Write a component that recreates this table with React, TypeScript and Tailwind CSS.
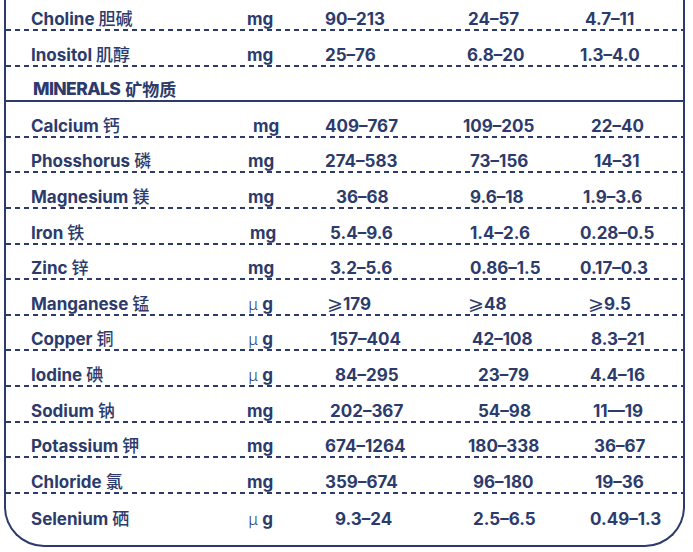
import React from "react";

type Row = {
  name: string;
  cn: string;
  unit: "mg" | "ug";
  unitCls: string;
  v1: string;
  c1: string;
  v2: string;
  c2: string;
  v3: string;
  c3: string;
};

const top: Row[] = [
  { name: "Choline", cn: "胆碱", unit: "mg", unitCls: "pl-0", v1: "90–213", c1: "pl-0", v2: "24–57", c2: "pl-[5px]", v3: "4.7–11", c3: "pl-[5px]" },
  { name: "Inositol", cn: "肌醇", unit: "mg", unitCls: "pl-0", v1: "25–76", c1: "pl-0", v2: "6.8–20", c2: "pl-[4px]", v3: "1.3–4.0", c3: "pl-0" },
];

const minerals: Row[] = [
  { name: "Calcium", cn: "钙", unit: "mg", unitCls: "pl-[6px]", v1: "409–767", c1: "pl-0", v2: "109–205", c2: "pl-0", v3: "22–40", c3: "pl-[11px]" },
  { name: "Phosshorus", cn: "磷", unit: "mg", unitCls: "pl-[1px]", v1: "274–583", c1: "pl-0", v2: "73–156", c2: "pl-[7px]", v3: "14–31", c3: "pl-[14px]" },
  { name: "Magnesium", cn: "镁", unit: "mg", unitCls: "pl-[1px]", v1: "36–68", c1: "pl-[11px]", v2: "9.6–18", c2: "pl-[7px]", v3: "1.9–3.6", c3: "pl-[3px]" },
  { name: "Iron", cn: "铁", unit: "mg", unitCls: "pl-[3px]", v1: "5.4–9.6", c1: "pl-[5px]", v2: "1.4–2.6", c2: "pl-[7px]", v3: "0.28–0.5", c3: "pl-0" },
  { name: "Zinc", cn: "锌", unit: "mg", unitCls: "pl-[1px]", v1: "3.2–5.6", c1: "pl-[5px]", v2: "0.86–1.5", c2: "pl-[7px]", v3: "0.17–0.3", c3: "pl-0" },
  { name: "Manganese", cn: "锰", unit: "ug", unitCls: "pl-[1px]", v1: "⩾179", c1: "pl-[2px]", v2: "⩾48", c2: "pl-[5px]", v3: "⩾9.5", c3: "pl-[8px]" },
  { name: "Copper", cn: "铜", unit: "ug", unitCls: "pl-[1px]", v1: "157–404", c1: "pl-[5px]", v2: "42–108", c2: "pl-[9px]", v3: "8.3–21", c3: "pl-[11px]" },
  { name: "Iodine", cn: "碘", unit: "ug", unitCls: "pl-[1px]", v1: "84–295", c1: "pl-[10px]", v2: "23–79", c2: "pl-[15px]", v3: "4.4–16", c3: "pl-[10px]" },
  { name: "Sodium", cn: "钠", unit: "mg", unitCls: "pl-0", v1: "202–367", c1: "pl-[5px]", v2: "54–98", c2: "pl-[15px]", v3: "11—19", c3: "pl-[13px]" },
  { name: "Potassium", cn: "钾", unit: "mg", unitCls: "pl-0", v1: "674–1264", c1: "pl-0", v2: "180–338", c2: "pl-[5px]", v3: "36–67", c3: "pl-[14px]" },
  { name: "Chloride", cn: "氯", unit: "mg", unitCls: "pl-0", v1: "359–674", c1: "pl-0", v2: "96–180", c2: "pl-[10px]", v3: "19–36", c3: "pl-[15px]" },
  { name: "Selenium", cn: "硒", unit: "ug", unitCls: "pl-[1px]", v1: "9.3–24", c1: "pl-[10px]", v2: "2.5–6.5", c2: "pl-[10px]", v3: "0.49–1.3", c3: "pl-[10px]" },
];

const Dashed = () => (
  <div className="h-[2px] w-full bg-[repeating-linear-gradient(to_right,#2c3b6b_0px,#2c3b6b_5px,transparent_5px,transparent_9px)]" />
);

const Solid = () => <div className="h-[2px] w-full bg-[#2c3b6b]" />;

function Value({ v, cls }: { v: string; cls: string }) {
  if (v.startsWith("⩾")) {
    return (
      <div className={cls}>
        <span className="font-['DejaVu_Sans','Noto_Sans_CJK_SC',sans-serif] text-[19px] font-normal">⩾</span>
        {v.slice(1)}
      </div>
    );
  }
  return <div className={cls}>{v}</div>;
}

function DataRow({ r, last }: { r: Row; last?: boolean }) {
  return (
    <div className="flex h-[35.6px] flex-col">
      <div className="grid flex-1 grid-cols-[216px_78px_138px_117px_1fr] items-end pl-[25px] leading-[20px]">
        <div>
          {r.name}{" "}
          <span className="font-['Noto_Sans_CJK_SC',sans-serif] font-medium">{r.cn}</span>
        </div>
        <div className={r.unitCls}>
          {r.unit === "mg" ? (
            "mg"
          ) : (
            <>
              <span className="font-['Noto_Sans_CJK_SC',sans-serif] font-light">μ</span> g
            </>
          )}
        </div>
        <Value v={r.v1} cls={r.c1} />
        <Value v={r.v2} cls={r.c2} />
        <Value v={r.v3} cls={r.c3} />
      </div>
      {!last && <Dashed />}
    </div>
  );
}

export default function App() {
  return (
    <div className="h-[552px] w-[693px] overflow-hidden bg-white font-['Inter','Noto_Sans_CJK_SC',sans-serif] text-[17px] font-bold text-[#2c3b6b]">
      <div className="ml-[4px] -mt-[4.6px] w-[681px] rounded-b-[40px] border-2 border-t-0 border-[#2c3b6b] pb-[16px]">
        {top.map((r) => (
          <DataRow key={r.name} r={r} />
        ))}
        <div className="flex h-[35.6px] flex-col">
          <div className="flex flex-1 items-end pb-[1px] pl-[27px] leading-[20px]">
            <span className="text-[17.5px] font-extrabold tracking-[-0.6px]">MINERALS</span>
            <span className="ml-[5px] font-['Noto_Sans_CJK_SC',sans-serif] font-bold">矿物质</span>
          </div>
          <Solid />
        </div>
        {minerals.map((r, i) => (
          <DataRow key={r.name} r={r} last={i === minerals.length - 1} />
        ))}
      </div>
    </div>
  );
}
